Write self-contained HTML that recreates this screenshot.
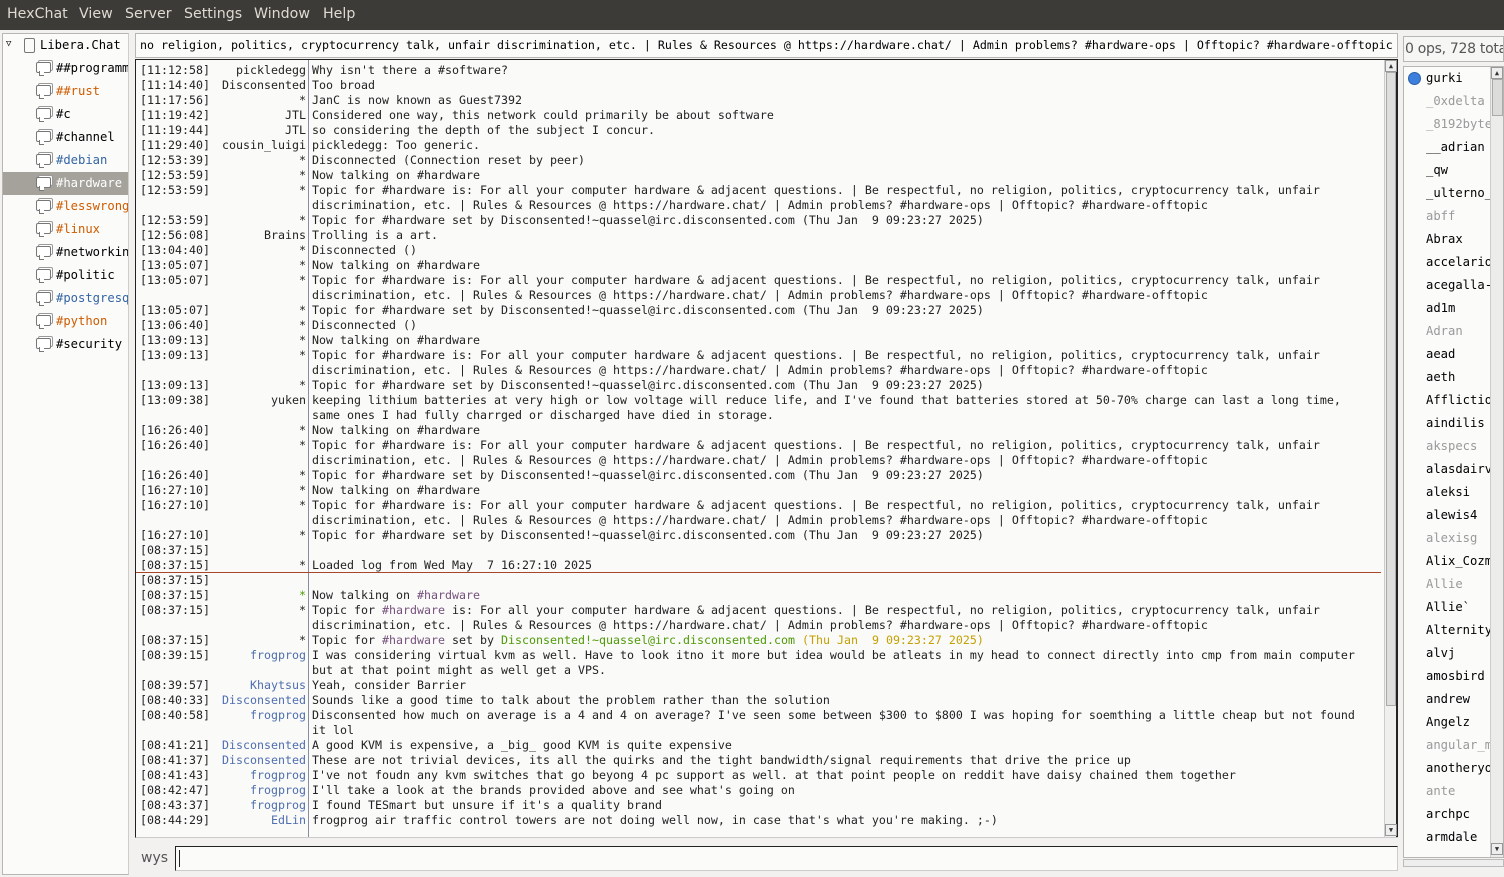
<!DOCTYPE html>
<html><head><meta charset="utf-8"><style>
*{margin:0;padding:0;box-sizing:border-box}
body{width:1504px;height:877px;background:#f2f1f0;font-family:"DejaVu Sans","Liberation Sans",sans-serif;position:relative;overflow:hidden}
#menu{position:absolute;left:0;top:0;width:1504px;height:30px;background:#3c3b37;color:#dfdbd2;font-size:14.2px}
#menu span{position:absolute;top:6px}
#tree{position:absolute;left:2px;top:33px;width:127px;height:842px;background:#fbfbfa;border:1px solid #b8b6b2;border-right:1px solid #cfcdc9;font-size:12.2px;font-family:"DejaVu Sans Mono",monospace}
.ti{position:absolute;left:0;width:125px;height:23px;line-height:23px;white-space:nowrap;overflow:hidden}
.ti .ic{position:absolute;left:33px;top:5px;width:15px;height:11px;border:1px solid #777;border-radius:2px;background:#fff;box-shadow:2px -2px 0 -1px #fff,2px -2px 0 0 #999}
.ti .ic:after{content:"";position:absolute;left:2px;top:8px;width:4px;height:4px;border-left:1px solid #777;border-bottom:1px solid #777;background:#fff}
.ti .t{position:absolute;left:53px}
.sel{background:#a5a29c;color:#fff}
.or{color:#ce5c00}.bl{color:#3465a4}
#topic{position:absolute;left:135px;top:33px;width:1263px;height:25px;background:#fbfbfa;border:1px solid #b8b6b2;font-family:"DejaVu Sans Mono",monospace;font-size:11.63px;line-height:23px;padding-left:4px;white-space:pre;overflow:hidden}
#chat{position:absolute;left:135px;top:59px;width:1263px;height:779px;background:#fafaf9;border:1px solid #222;border-right:none;border-bottom:1px solid #ccc;font-family:"DejaVu Sans Mono",monospace;font-size:11.63px;color:#222;overflow:hidden}
#sep{position:absolute;left:172px;top:0;width:1px;height:779px;background:#8a8ca0}
#mark{position:absolute;left:0;top:512px;width:1245px;height:1px;background:#a6472c}
#lines{position:absolute;left:0;top:3px}
.l{position:relative;height:15px;line-height:15px;white-space:pre}
.a{position:absolute;left:4px}
.n{position:absolute;left:0;width:170px;text-align:right}
.x{position:absolute;left:176px}
.nb{color:#4e6eae}.g{color:#4e9a06}.p{color:#75507b}.y{color:#c4a000}
#sb{position:absolute;left:1248px;top:0;width:14px;height:778px;background:#efefee;border-left:1px solid #ccc;border-right:2px solid #222}
#sbt{position:absolute;left:1px;top:12px;width:10px;height:634px;background:#dededd;border:1px solid #aaa}
.arr{position:absolute;left:0;width:12px;height:12px;background:#eee;border:1px solid #999;font-size:7px;text-align:center;line-height:11px;color:#333}
#ulh{position:absolute;left:1403px;top:36px;width:101px;height:26px;background:#f6f6f5;border:1px solid #b8b6b2;font-size:14px;line-height:24px;padding-left:1px;color:#555;white-space:nowrap;overflow:hidden;letter-spacing:-0.3px}
#ul{position:absolute;left:1403px;top:66px;width:101px;height:792px;background:#fbfbfa;border:1px solid #b8b6b2;font-family:"DejaVu Sans Mono",monospace;font-size:12.2px;overflow:hidden}
#ul div{position:absolute;left:22px;height:23px;line-height:23px;white-space:nowrap}
.gr{color:#999}
#usb{position:absolute;left:86px;top:0;width:14px;height:790px;background:#ececeb;border-left:1px solid #ccc}
#wys{position:absolute;left:141px;top:850px;font-size:14px;color:#555}
#inp{position:absolute;left:175px;top:846px;width:1223px;height:25px;background:#fbfbfa;border:1px solid #222;border-right:1px solid #ccc;border-bottom:1px solid #ccc}
#inp:after{content:"";position:absolute;left:3px;top:3px;width:1px;height:17px;background:#222}
</style></head><body>
<div id="menu"><span style="left:7px">HexChat</span><span style="left:79px">View</span><span style="left:125px">Server</span><span style="left:184px">Settings</span><span style="left:254px">Window</span><span style="left:323px">Help</span></div>
<div id="tree">
<div class="ti" style="top:0"><span style="position:absolute;left:3px;top:-1px;font-size:9px">▽</span><span style="position:absolute;left:21px;top:4px;width:11px;height:15px;border:1px solid #777;border-radius:2px"></span><span class="t" style="left:37px">Libera.Chat</span></div>
<div class="ti" style="top:23px"><span class="ic"></span><span class="t">##programming</span></div>
<div class="ti or" style="top:46px"><span class="ic"></span><span class="t">##rust</span></div>
<div class="ti" style="top:69px"><span class="ic"></span><span class="t">#c</span></div>
<div class="ti" style="top:92px"><span class="ic"></span><span class="t">#channel</span></div>
<div class="ti bl" style="top:115px"><span class="ic"></span><span class="t">#debian</span></div>
<div class="ti sel" style="top:138px"><span class="ic"></span><span class="t">#hardware</span></div>
<div class="ti or" style="top:161px"><span class="ic"></span><span class="t">#lesswrong</span></div>
<div class="ti or" style="top:184px"><span class="ic"></span><span class="t">#linux</span></div>
<div class="ti" style="top:207px"><span class="ic"></span><span class="t">#networking</span></div>
<div class="ti" style="top:230px"><span class="ic"></span><span class="t">#politic</span></div>
<div class="ti bl" style="top:253px"><span class="ic"></span><span class="t">#postgresql</span></div>
<div class="ti or" style="top:276px"><span class="ic"></span><span class="t">#python</span></div>
<div class="ti" style="top:299px"><span class="ic"></span><span class="t">#security</span></div>
</div>
<div id="topic">no religion, politics, cryptocurrency talk, unfair discrimination, etc. | Rules &amp; Resources @ https://hardware.chat/ | Admin problems? #hardware-ops | Offtopic? #hardware-offtopic</div>
<div id="chat"><div id="sep"></div><div id="mark"></div>
<div id="lines">
<div class="l"><span class="a">[11:12:58]</span><span class="n">pickledegg</span><span class="x">Why isn't there a #software?</span></div>
<div class="l"><span class="a">[11:14:40]</span><span class="n">Disconsented</span><span class="x">Too broad</span></div>
<div class="l"><span class="a">[11:17:56]</span><span class="n">*</span><span class="x">JanC is now known as Guest7392</span></div>
<div class="l"><span class="a">[11:19:42]</span><span class="n">JTL</span><span class="x">Considered one way, this network could primarily be about software</span></div>
<div class="l"><span class="a">[11:19:44]</span><span class="n">JTL</span><span class="x">so considering the depth of the subject I concur.</span></div>
<div class="l"><span class="a">[11:29:40]</span><span class="n">cousin_luigi</span><span class="x">pickledegg: Too generic.</span></div>
<div class="l"><span class="a">[12:53:39]</span><span class="n">*</span><span class="x">Disconnected (Connection reset by peer)</span></div>
<div class="l"><span class="a">[12:53:59]</span><span class="n">*</span><span class="x">Now talking on #hardware</span></div>
<div class="l"><span class="a">[12:53:59]</span><span class="n">*</span><span class="x">Topic for #hardware is: For all your computer hardware &amp; adjacent questions. | Be respectful, no religion, politics, cryptocurrency talk, unfair</span></div>
<div class="l"><span class="x">discrimination, etc. | Rules &amp; Resources @ https://hardware.chat/ | Admin problems? #hardware-ops | Offtopic? #hardware-offtopic</span></div>
<div class="l"><span class="a">[12:53:59]</span><span class="n">*</span><span class="x">Topic for #hardware set by Disconsented!~quassel@irc.disconsented.com (Thu Jan  9 09:23:27 2025)</span></div>
<div class="l"><span class="a">[12:56:08]</span><span class="n">Brains</span><span class="x">Trolling is a art.</span></div>
<div class="l"><span class="a">[13:04:40]</span><span class="n">*</span><span class="x">Disconnected ()</span></div>
<div class="l"><span class="a">[13:05:07]</span><span class="n">*</span><span class="x">Now talking on #hardware</span></div>
<div class="l"><span class="a">[13:05:07]</span><span class="n">*</span><span class="x">Topic for #hardware is: For all your computer hardware &amp; adjacent questions. | Be respectful, no religion, politics, cryptocurrency talk, unfair</span></div>
<div class="l"><span class="x">discrimination, etc. | Rules &amp; Resources @ https://hardware.chat/ | Admin problems? #hardware-ops | Offtopic? #hardware-offtopic</span></div>
<div class="l"><span class="a">[13:05:07]</span><span class="n">*</span><span class="x">Topic for #hardware set by Disconsented!~quassel@irc.disconsented.com (Thu Jan  9 09:23:27 2025)</span></div>
<div class="l"><span class="a">[13:06:40]</span><span class="n">*</span><span class="x">Disconnected ()</span></div>
<div class="l"><span class="a">[13:09:13]</span><span class="n">*</span><span class="x">Now talking on #hardware</span></div>
<div class="l"><span class="a">[13:09:13]</span><span class="n">*</span><span class="x">Topic for #hardware is: For all your computer hardware &amp; adjacent questions. | Be respectful, no religion, politics, cryptocurrency talk, unfair</span></div>
<div class="l"><span class="x">discrimination, etc. | Rules &amp; Resources @ https://hardware.chat/ | Admin problems? #hardware-ops | Offtopic? #hardware-offtopic</span></div>
<div class="l"><span class="a">[13:09:13]</span><span class="n">*</span><span class="x">Topic for #hardware set by Disconsented!~quassel@irc.disconsented.com (Thu Jan  9 09:23:27 2025)</span></div>
<div class="l"><span class="a">[13:09:38]</span><span class="n">yuken</span><span class="x">keeping lithium batteries at very high or low voltage will reduce life, and I've found that batteries stored at 50-70% charge can last a long time,</span></div>
<div class="l"><span class="x">same ones I had fully charrged or discharged have died in storage.</span></div>
<div class="l"><span class="a">[16:26:40]</span><span class="n">*</span><span class="x">Now talking on #hardware</span></div>
<div class="l"><span class="a">[16:26:40]</span><span class="n">*</span><span class="x">Topic for #hardware is: For all your computer hardware &amp; adjacent questions. | Be respectful, no religion, politics, cryptocurrency talk, unfair</span></div>
<div class="l"><span class="x">discrimination, etc. | Rules &amp; Resources @ https://hardware.chat/ | Admin problems? #hardware-ops | Offtopic? #hardware-offtopic</span></div>
<div class="l"><span class="a">[16:26:40]</span><span class="n">*</span><span class="x">Topic for #hardware set by Disconsented!~quassel@irc.disconsented.com (Thu Jan  9 09:23:27 2025)</span></div>
<div class="l"><span class="a">[16:27:10]</span><span class="n">*</span><span class="x">Now talking on #hardware</span></div>
<div class="l"><span class="a">[16:27:10]</span><span class="n">*</span><span class="x">Topic for #hardware is: For all your computer hardware &amp; adjacent questions. | Be respectful, no religion, politics, cryptocurrency talk, unfair</span></div>
<div class="l"><span class="x">discrimination, etc. | Rules &amp; Resources @ https://hardware.chat/ | Admin problems? #hardware-ops | Offtopic? #hardware-offtopic</span></div>
<div class="l"><span class="a">[16:27:10]</span><span class="n">*</span><span class="x">Topic for #hardware set by Disconsented!~quassel@irc.disconsented.com (Thu Jan  9 09:23:27 2025)</span></div>
<div class="l"><span class="a">[08:37:15]</span></div>
<div class="l"><span class="a">[08:37:15]</span><span class="n">*</span><span class="x">Loaded log from Wed May  7 16:27:10 2025</span></div>
<div class="l"><span class="a">[08:37:15]</span></div>
<div class="l"><span class="a">[08:37:15]</span><span class="n g">*</span><span class="x">Now talking on <span class="p">#hardware</span></span></div>
<div class="l"><span class="a">[08:37:15]</span><span class="n">*</span><span class="x">Topic for <span class="p">#hardware</span> is: For all your computer hardware &amp; adjacent questions. | Be respectful, no religion, politics, cryptocurrency talk, unfair</span></div>
<div class="l"><span class="x">discrimination, etc. | Rules &amp; Resources @ https://hardware.chat/ | Admin problems? #hardware-ops | Offtopic? #hardware-offtopic</span></div>
<div class="l"><span class="a">[08:37:15]</span><span class="n">*</span><span class="x">Topic for <span class="p">#hardware</span> set by <span class="g">Disconsented!~quassel@irc.disconsented.com</span> <span class="y">(Thu Jan  9 09:23:27 2025)</span></span></div>
<div class="l"><span class="a">[08:39:15]</span><span class="n nb">frogprog</span><span class="x">I was considering virtual kvm as well. Have to look itno it more but idea would be atleats in my head to connect directly into cmp from main computer</span></div>
<div class="l"><span class="x">but at that point might as well get a VPS.</span></div>
<div class="l"><span class="a">[08:39:57]</span><span class="n nb">Khaytsus</span><span class="x">Yeah, consider Barrier</span></div>
<div class="l"><span class="a">[08:40:33]</span><span class="n nb">Disconsented</span><span class="x">Sounds like a good time to talk about the problem rather than the solution</span></div>
<div class="l"><span class="a">[08:40:58]</span><span class="n nb">frogprog</span><span class="x">Disconsented how much on average is a 4 and 4 on average? I've seen some between $300 to $800 I was hoping for soemthing a little cheap but not found</span></div>
<div class="l"><span class="x">it lol</span></div>
<div class="l"><span class="a">[08:41:21]</span><span class="n nb">Disconsented</span><span class="x">A good KVM is expensive, a _big_ good KVM is quite expensive</span></div>
<div class="l"><span class="a">[08:41:37]</span><span class="n nb">Disconsented</span><span class="x">These are not trivial devices, its all the quirks and the tight bandwidth/signal requirements that drive the price up</span></div>
<div class="l"><span class="a">[08:41:43]</span><span class="n nb">frogprog</span><span class="x">I've not foudn any kvm switches that go beyong 4 pc support as well. at that point people on reddit have daisy chained them together</span></div>
<div class="l"><span class="a">[08:42:47]</span><span class="n nb">frogprog</span><span class="x">I'll take a look at the brands provided above and see what's going on</span></div>
<div class="l"><span class="a">[08:43:37]</span><span class="n nb">frogprog</span><span class="x">I found TESmart but unsure if it's a quality brand</span></div>
<div class="l"><span class="a">[08:44:29]</span><span class="n nb">EdLin</span><span class="x">frogprog air traffic control towers are not doing well now, in case that's what you're making. ;-)</span></div>
</div>
<div id="sb"><div class="arr" style="top:0">▲</div><div id="sbt"></div><div class="arr" style="top:764px">▼</div></div>
</div>
<div id="ulh">0 ops, 728 total</div>
<div id="ul">
<span style="position:absolute;left:4px;top:5px;width:13px;height:13px;border-radius:50%;background:#3d7fdc;border:1px solid #2a5fa8"></span>
<div style="top:0">gurki</div><div class="gr" style="top:23px">_0xdelta</div><div class="gr" style="top:46px">_8192byte</div><div style="top:69px">__adrian</div><div style="top:92px">_qw</div><div style="top:115px">_ulterno_</div><div class="gr" style="top:138px">abff</div><div style="top:161px">Abrax</div><div style="top:184px">accelario</div><div style="top:207px">acegalla-</div><div style="top:230px">ad1m</div><div class="gr" style="top:253px">Adran</div><div style="top:276px">aead</div><div style="top:299px">aeth</div><div style="top:322px">Afflictio</div><div style="top:345px">aindilis</div><div class="gr" style="top:368px">akspecs</div><div style="top:391px">alasdairv</div><div style="top:414px">aleksi</div><div style="top:437px">alewis4</div><div class="gr" style="top:460px">alexisg</div><div style="top:483px">Alix_Cozm</div><div class="gr" style="top:506px">Allie</div><div style="top:529px">Allie`</div><div style="top:552px">Alternity</div><div style="top:575px">alvj</div><div style="top:598px">amosbird</div><div style="top:621px">andrew</div><div style="top:644px">Angelz</div><div class="gr" style="top:667px">angular_m</div><div style="top:690px">anotheryo</div><div class="gr" style="top:713px">ante</div><div style="top:736px">archpc</div><div style="top:759px">armdale</div>
<span id="usb"><span class="arr" style="top:0">▲</span><span style="position:absolute;left:1px;top:12px;width:11px;height:37px;background:#dcdcdb;border:1px solid #aaa"></span><span class="arr" style="top:776px">▼</span></span>
</div>
<div style="position:absolute;left:1403px;top:859px;width:101px;height:8px;border:1px solid #bbb;background:#eee"></div>
<div id="wys">wys</div>
<div id="inp"></div>
</body></html>
